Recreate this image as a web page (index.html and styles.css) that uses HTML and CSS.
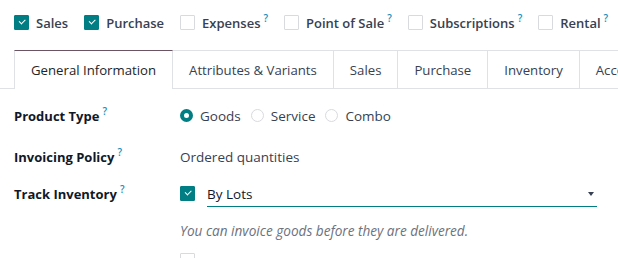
FILE: index.html
```html
<!DOCTYPE html>
<html lang="en">
<head>
    <meta charset="UTF-8">
    <title>Product</title>
    <link rel="stylesheet" href="styles.css">
</head>
<body>
    <div class="options">
        <label class="option"><span class="check checked"></span><span>Sales</span></label>
        <label class="option"><span class="check checked"></span><span>Purchase</span></label>
        <label class="option"><span class="check"></span><span>Expenses<sup class="help">?</sup></span></label>
        <label class="option"><span class="check"></span><span>Point of Sale<sup class="help">?</sup></span></label>
        <label class="option"><span class="check"></span><span>Subscriptions<sup class="help">?</sup></span></label>
        <label class="option"><span class="check"></span><span>Rental<sup class="help">?</sup></span></label>
    </div>

    <div class="tabs">
        <div class="tab active">General Information</div>
        <div class="tab">Attributes &amp; Variants</div>
        <div class="tab">Sales</div>
        <div class="tab">Purchase</div>
        <div class="tab">Inventory</div>
        <div class="tab">Accounting</div>
    </div>

    <div class="form">
        <div class="row first">
            <div class="label">Product Type<sup class="help">?</sup></div>
            <div class="value radios">
                <span class="radio checked"></span><span class="radio-text">Goods</span>
                <span class="radio"></span><span class="radio-text">Service</span>
                <span class="radio"></span><span class="radio-text">Combo</span>
            </div>
        </div>
        <div class="row">
            <div class="label">Invoicing Policy<sup class="help">?</sup></div>
            <div class="value">Ordered quantities</div>
        </div>
        <div class="row">
            <div class="label">Track Inventory<sup class="help">?</sup></div>
            <div class="value track">
                <span class="check checked"></span>
                <div class="select">By Lots<span class="caret"></span></div>
            </div>
        </div>
        <div class="row note">
            <div class="label"></div>
            <div class="value hint">You can invoice goods before they are delivered.</div>
        </div>
        <div class="row">
            <div class="label"></div>
            <div class="value"><span class="check"></span></div>
        </div>
    </div>
</body>
</html>
```

FILE: styles.css
```css
body {
    margin: 0;
    font-family: 'Open Sans', 'Noto Sans', sans-serif;
    font-size: 13px;
    color: #374151;
    background-color: white;
    overflow: hidden;
    height: 258px;
}
.options {
    display: flex;
    align-items: center;
    gap: 16px;
    padding: 9px 14px 0;
    height: 27px;
    white-space: nowrap;
}
.option {
    display: flex;
    align-items: center;
    gap: 7px;
    font-weight: 600;
    color: #374151;
}
.check {
    display: inline-block;
    width: 13px;
    height: 13px;
    border: 1px solid #d8dadd;
    border-radius: 1px;
    background-color: white;
    flex: none;
    position: relative;
    box-sizing: content-box;
}
.check.checked {
    background-color: #017e84;
    border-color: #017e84;
}
.check.checked::after {
    content: '';
    position: absolute;
    left: 4px;
    top: 3px;
    width: 5px;
    height: 2.5px;
    border-left: 1.6px solid white;
    border-bottom: 1.6px solid white;
    transform: rotate(-45deg);
}
.help {
    color: #1a8dbb;
    font-size: 10px;
    font-weight: 600;
    margin-left: 3px;
    position: relative;
    top: -1px;
}
.tabs {
    display: flex;
    margin-top: 14px;
    padding-left: 14px;
    border-bottom: 1px solid #dee2e6;
    white-space: nowrap;
}
.tab {
    height: 37px;
    line-height: 38px;
    padding: 0 16px;
    border: 1px solid #dee2e6;
    border-left: none;
    border-bottom: none;
    color: #374151;
    font-size: 13.2px;
}
.tab.active {
    border-left: 1px solid #dee2e6;
    border-top: 1px solid #6b5565;
    background-color: white;
    margin-bottom: -1px;
    height: 38px;
    color: #212529;
}
.form {
    padding: 13px 14px 0;
}
.row {
    display: flex;
    align-items: center;
    min-height: 27px;
    margin-bottom: 10px;
}
.row.first {
    margin-bottom: 14px;
}
.row.note {
    margin-bottom: 5px;
}
.label {
    width: 166px;
    flex: none;
    font-weight: 700;
    color: #111827;
    font-size: 13px;
}
.value {
    flex: 1;
    color: #374151;
    font-size: 13.5px;
}
.radios {
    display: flex;
    align-items: center;
}
.radio {
    width: 11px;
    height: 11px;
    border: 1px solid #d8dadd;
    border-radius: 50%;
    box-sizing: content-box;
    flex: none;
}
.radio.checked {
    width: 5px;
    height: 5px;
    border: 4px solid #017e84;
}
.radio-text {
    margin: 0 10px 0 7px;
}
.track {
    display: flex;
    align-items: center;
    gap: 12px;
    padding-right: 7px;
}
.select {
    flex: 1;
    position: relative;
    border-bottom: 1px solid #017e84;
    padding: 3px 0 3px;
    margin-top: 1px;
    color: #111827;
}
.caret {
    position: absolute;
    right: 3px;
    top: 10px;
    border-left: 3px solid transparent;
    border-right: 3px solid transparent;
    border-top: 4px solid #374151;
}
.hint {
    font-style: italic;
    color: #6b7280;
    font-size: 13.6px;
}
```
